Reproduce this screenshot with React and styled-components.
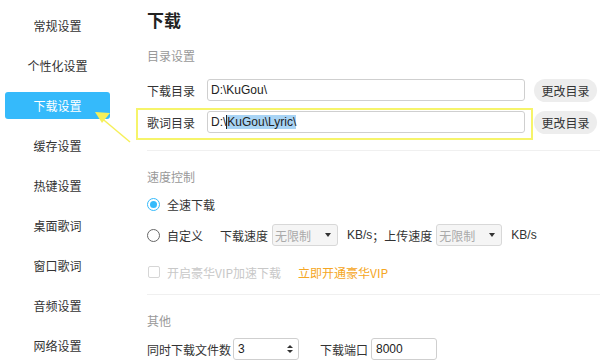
import React from "react";
import styled, { createGlobalStyle } from "styled-components";

const GlobalStyle = createGlobalStyle`
  html, body {
    margin: 0;
    padding: 0;
    background: #fff;
  }
  body {
    font-family: "Microsoft YaHei", "Noto Sans CJK SC", "Liberation Sans", sans-serif;
    font-size: 12px;
    color: #333;
  }
`;

const Page = styled.div`
  position: relative;
  display: flex;
  width: 600px;
  height: 364px;
  overflow: hidden;
  background: #fff;
`;

const Sidebar = styled.div`
  width: 115px;
  flex-shrink: 0;
  padding: 12px 5px 0;
  box-sizing: border-box;
  display: flex;
  flex-direction: column;
  gap: 13px;
`;

const NavItem = styled.div`
  height: 27px;
  line-height: 27px;
  text-align: center;
  border-radius: 3px;
  font-size: 12px;
  color: ${(p) => (p.active ? "#fff" : "#333")};
  background: ${(p) => (p.active ? "#35bafb" : "transparent")};
`;

const Main = styled.div`
  flex: 1;
  padding: 8px 3px 0 32px;
  display: flex;
  flex-direction: column;
`;

const Title = styled.h1`
  margin: 0;
  font-size: 17px;
  line-height: 24px;
  font-weight: bold;
  color: #222;
`;

const Section = styled.div`
  font-size: 12px;
  line-height: 16px;
  color: #999;
  margin-top: ${(p) => p.top}px;
`;

const Divider = styled.div`
  height: 1px;
  background: #f0f0f0;
  margin-top: ${(p) => p.top}px;
  margin-right: -3px;
`;

const Row = styled.div`
  display: flex;
  align-items: center;
  height: ${(p) => p.h || 22}px;
  margin-top: ${(p) => p.top}px;
`;

const Field = styled.div`
  position: relative;
  display: flex;
  align-items: center;
  width: 378px;
  &::after {
    content: "";
    display: ${(p) => (p.highlight ? "block" : "none")};
    position: absolute;
    left: -11px;
    right: -8px;
    top: -3px;
    bottom: -7px;
    border: 2px solid #f6f46a;
    pointer-events: none;
  }
`;

const Label = styled.span`
  width: 60px;
  flex-shrink: 0;
  color: #333;
`;

const PathInput = styled.div`
  flex: 1;
  height: 22px;
  box-sizing: border-box;
  border: 1px solid #cfcfcf;
  border-radius: 3px;
  padding-left: 3px;
  line-height: 20px;
  font-family: "Liberation Sans", "Noto Sans CJK SC", sans-serif;
  font-size: 12px;
  color: #222;
  white-space: nowrap;
`;

const Caret = styled.span`
  display: inline-block;
  width: 1px;
  height: 14px;
  background: #222;
  vertical-align: -3px;
`;

const Selected = styled.span`
  background: #a8d4f5;
`;

const GrayButton = styled.div`
  margin-left: 9px;
  width: 63px;
  height: 23px;
  line-height: 23px;
  border-radius: 12px;
  background: #ededed;
  text-align: center;
  color: #333;
`;

const Radio = styled.span`
  width: 13px;
  height: 13px;
  box-sizing: border-box;
  border-radius: 50%;
  border: 1px solid ${(p) => (p.checked ? "#35bafb" : "#666")};
  display: flex;
  align-items: center;
  justify-content: center;
  margin-right: 7px;
  &::after {
    content: "";
    display: ${(p) => (p.checked ? "block" : "none")};
    width: 7px;
    height: 7px;
    border-radius: 50%;
    background: #35bafb;
  }
`;

const Text = styled.span`
  margin-left: ${(p) => p.ml || 0}px;
  width: ${(p) => (p.w ? `${p.w}px` : "auto")};
  flex-shrink: 0;
  color: ${(p) => p.color || "#333"};
  white-space: nowrap;
  font-family: ${(p) =>
    p.latin
      ? `"Liberation Sans", "Noto Sans CJK SC", sans-serif`
      : "inherit"};
`;

const SelectBox = styled.div`
  margin-left: ${(p) => p.ml || 0}px;
  width: 66px;
  height: 22px;
  box-sizing: border-box;
  border: 1px solid #d8d8d8;
  border-radius: 3px;
  background: #f5f5f5;
  display: flex;
  align-items: center;
  justify-content: space-between;
  padding: 0 6px 0 2px;
  color: #aaa;
  &::after {
    content: "";
    border-left: 3px solid transparent;
    border-right: 3px solid transparent;
    border-top: 4px solid #333;
  }
`;

const Checkbox = styled.span`
  width: 12px;
  height: 12px;
  box-sizing: border-box;
  border: 1px solid #d6d6d6;
  border-radius: 2px;
  margin: 0 7px 0 1px;
`;

const NumberBox = styled.div`
  margin-left: ${(p) => p.ml || 0}px;
  width: 66px;
  height: 22px;
  box-sizing: border-box;
  border: 1px solid #cfcfcf;
  border-radius: 3px;
  display: flex;
  align-items: center;
  justify-content: space-between;
  padding: 0 5px 0 4px;
  font-family: "Liberation Sans", sans-serif;
  color: #222;
`;

const Spinner = styled.span`
  display: flex;
  flex-direction: column;
  gap: 2px;
  &::before,
  &::after {
    content: "";
    border-left: 3px solid transparent;
    border-right: 3px solid transparent;
  }
  &::before {
    border-bottom: 3px solid #333;
  }
  &::after {
    border-top: 3px solid #333;
  }
`;

const Arrow = styled.svg`
  position: absolute;
  left: 90px;
  top: 106px;
  pointer-events: none;
`;

const navItems = [
  "常规设置",
  "个性化设置",
  "下载设置",
  "缓存设置",
  "热键设置",
  "桌面歌词",
  "窗口歌词",
  "音频设置",
  "网络设置",
];

export default function App() {
  return (
    <Page>
      <GlobalStyle />
      <Sidebar>
        {navItems.map((n) => (
          <NavItem key={n} active={n === "下载设置"}>
            {n}
          </NavItem>
        ))}
      </Sidebar>

      <Main>
        <Title>下载</Title>
        <Section top={16}>目录设置</Section>

        <Row top={15}>
          <Field>
            <Label>下载目录</Label>
            <PathInput>D:\KuGou\</PathInput>
          </Field>
          <GrayButton>更改目录</GrayButton>
        </Row>
        <Row top={10}>
          <Field highlight>
            <Label>歌词目录</Label>
            <PathInput>
              D:\<Caret />
              <Selected>KuGou\Lyric\</Selected>
            </PathInput>
          </Field>
          <GrayButton>更改目录</GrayButton>
        </Row>

        <Divider top={17} />
        <Section top={18}>速度控制</Section>

        <Row top={9} h={20}>
          <Radio checked />
          <Text>全速下载</Text>
        </Row>
        <Row top={10}>
          <Radio />
          <Text w={36}>自定义</Text>
          <Text ml={17} w={52}>下载速度</Text>
          <SelectBox>无限制</SelectBox>
          <Text ml={9} latin>
            KB/s
          </Text>
          <Text>；</Text>
          <Text w={52}>上传速度</Text>
          <SelectBox>无限制</SelectBox>
          <Text ml={9} latin>
            KB/s
          </Text>
        </Row>
        <Row top={15}>
          <Checkbox />
          <Text w={131} color="#c8c8c8">开启豪华VIP加速下载</Text>
          <Text color="#f5a623">立即开通豪华VIP</Text>
        </Row>

        <Divider top={11} />
        <Section top={18}>其他</Section>

        <Row top={9}>
          <Text w={86}>同时下载文件数</Text>
          <NumberBox>
            3<Spinner />
          </NumberBox>
          <Text ml={21} w={51}>下载端口</Text>
          <NumberBox>8000</NumberBox>
        </Row>
      </Main>

      <Arrow width="45" height="40" viewBox="0 0 45 40">
        <line x1="40" y1="36" x2="9" y2="10" stroke="#f6f05a" strokeWidth="1.5" />
        <polygon points="5,6 20,7 12,17" fill="#f6f05a" />
      </Arrow>
    </Page>
  );
}
